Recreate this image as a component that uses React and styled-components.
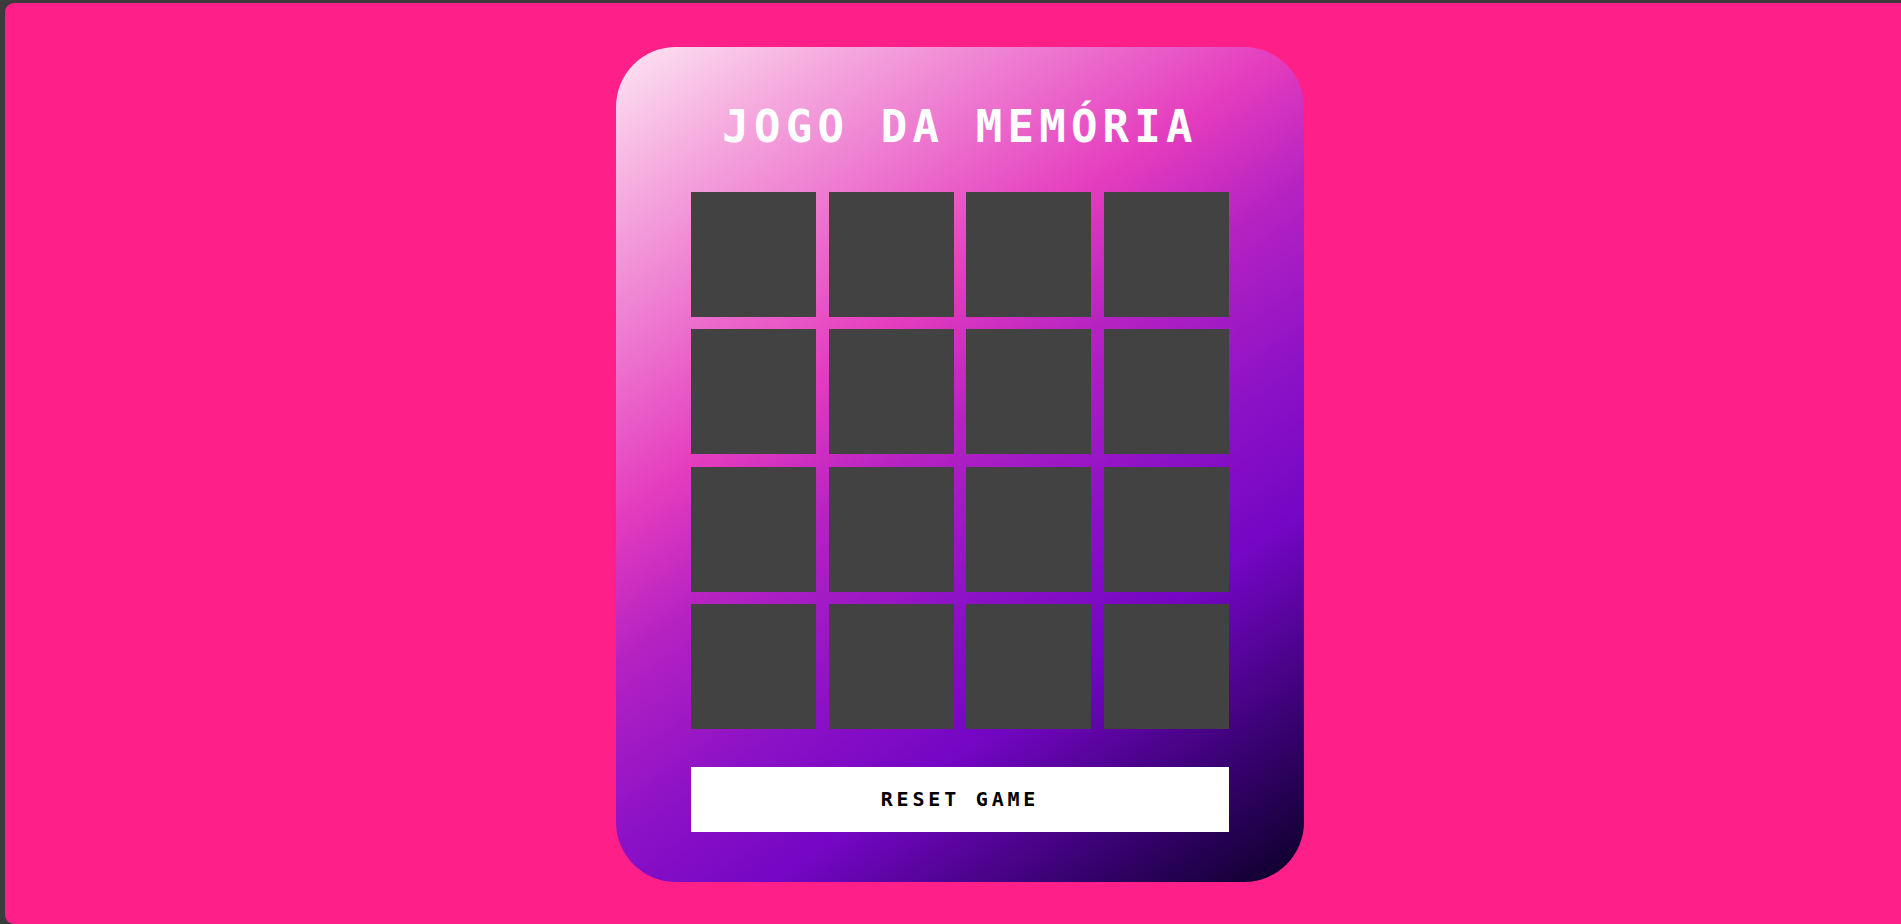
import React, { useState } from 'react';
import styled, { createGlobalStyle } from 'styled-components';

const GlobalStyle = createGlobalStyle`
  html, body {
    margin: 0;
    padding: 0;
    background: #3c3c3c;
    overflow: hidden;
  }
  * {
    box-sizing: border-box;
  }
`;

const TOTAL_CARDS = 16;

const App = () => {
  const [cards, setCards] = useState(() => Array.from({ length: TOTAL_CARDS }, (_, i) => ({ id: i, open: false })));

  const handleReset = () => {
    setCards(prev => prev.map(card => ({ ...card, open: false })));
  };

  return (
    <>
      <GlobalStyle />
      <Page>
        <Board>
          <Title>JOGO DA MEMÓRIA</Title>
          <Grid>
            {cards.map(card => (
              <Tile key={card.id} $open={card.open} />
            ))}
          </Grid>
          <ResetButton onClick={handleReset}>RESET GAME</ResetButton>
        </Board>
      </Page>
    </>
  );
};

// Styled Components
const Page = styled.main`
  margin: 3px 0 0 5px;
  padding-top: 44px;
  width: 1910px;
  height: 921px;
  background: #fe1f88;
  border-radius: 9px 0 0 9px;
  display: flex;
  align-items: flex-start;
  justify-content: center;
`;

const Board = styled.section`
  width: 688px;
  height: 835px;
  padding: 54px 75px 50px;
  border-radius: 60px;
  background: linear-gradient(
    145deg,
    #fde6f3 0%,
    #f5aade 12%,
    #e43cbe 36%,
    #b522c2 47%,
    #8e12c6 60%,
    #7406c4 72%,
    #35016c 88%,
    #0a0025 100%
  );
  display: flex;
  flex-direction: column;
  align-items: center;
`;

const Title = styled.h1`
  margin: 0 0 40px;
  font-family: "DejaVu Sans Mono", monospace;
  font-size: 44px;
  font-weight: 700;
  letter-spacing: 5.2px;
  color: #ffffff;
  line-height: normal;
`;

const Grid = styled.div`
  display: grid;
  grid-template-columns: repeat(4, 125px);
  grid-auto-rows: 125px;
  column-gap: 12.67px;
  row-gap: 12.33px;
`;

const Tile = styled.div`
  background: ${props => props.$open ? '#ffffff' : '#424242'};
`;

const ResetButton = styled.button`
  margin-top: 38px;
  width: 538px;
  height: 65px;
  border: none;
  background: #ffffff;
  color: #000000;
  font-family: "DejaVu Sans Mono", monospace;
  font-size: 20px;
  font-weight: 700;
  letter-spacing: 3.8px;
  cursor: pointer;
`;

export default App;
